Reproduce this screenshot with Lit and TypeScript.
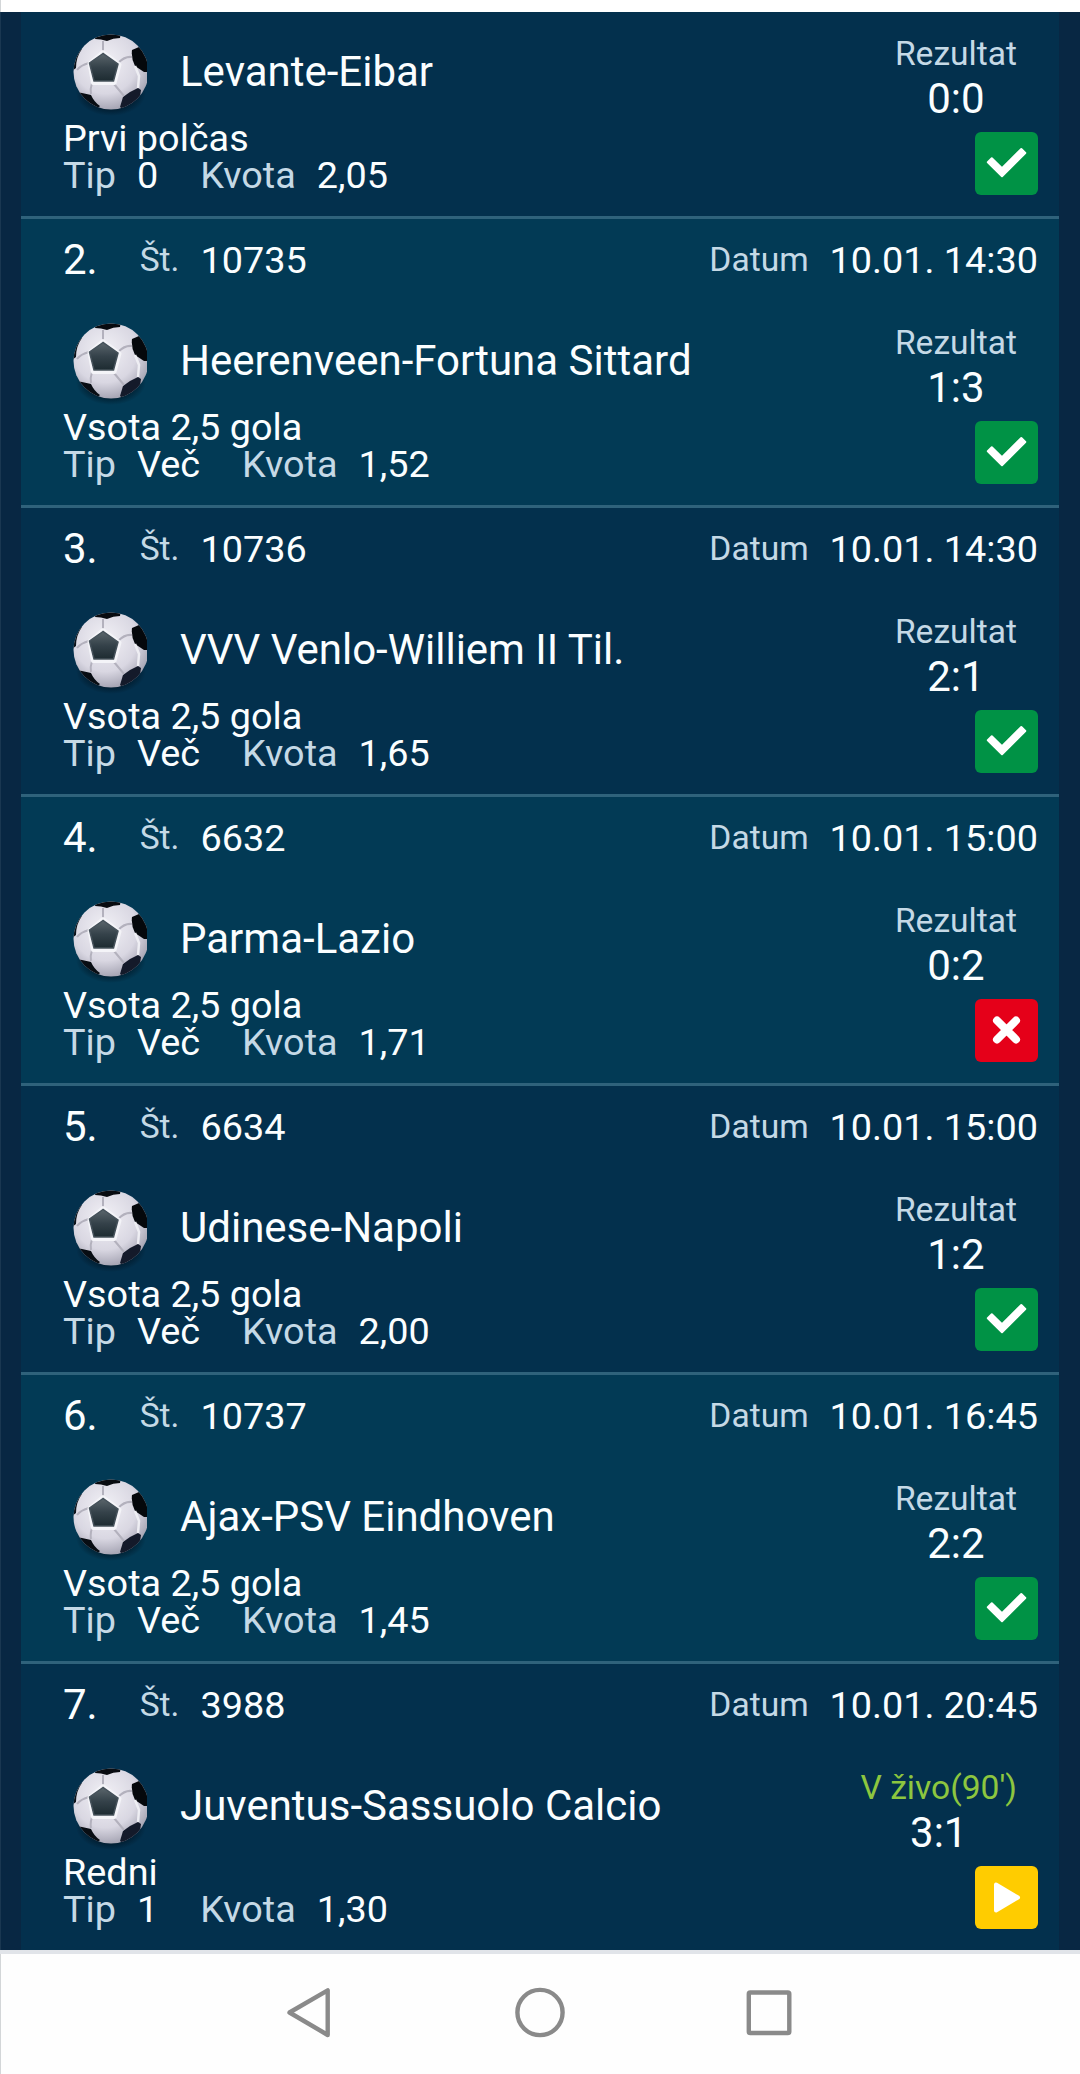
import { LitElement, html, css, svg } from "lit";
import { customElement, property } from "lit/decorators.js";

type Status = "won" | "lost" | "live";

interface Match {
  index: number;
  code?: string;
  date?: string;
  teams: string;
  market: string;
  tip: string;
  odds: string;
  resultLabel: string;
  score: string;
  status: Status;
}

const MATCHES: Match[] = [
  { index: 1, teams: "Levante-Eibar", market: "Prvi polčas", tip: "0", odds: "2,05", resultLabel: "Rezultat", score: "0:0", status: "won" },
  { index: 2, code: "10735", date: "10.01. 14:30", teams: "Heerenveen-Fortuna Sittard", market: "Vsota 2,5 gola", tip: "Več", odds: "1,52", resultLabel: "Rezultat", score: "1:3", status: "won" },
  { index: 3, code: "10736", date: "10.01. 14:30", teams: "VVV Venlo-Williem II Til.", market: "Vsota 2,5 gola", tip: "Več", odds: "1,65", resultLabel: "Rezultat", score: "2:1", status: "won" },
  { index: 4, code: "6632", date: "10.01. 15:00", teams: "Parma-Lazio", market: "Vsota 2,5 gola", tip: "Več", odds: "1,71", resultLabel: "Rezultat", score: "0:2", status: "lost" },
  { index: 5, code: "6634", date: "10.01. 15:00", teams: "Udinese-Napoli", market: "Vsota 2,5 gola", tip: "Več", odds: "2,00", resultLabel: "Rezultat", score: "1:2", status: "won" },
  { index: 6, code: "10737", date: "10.01. 16:45", teams: "Ajax-PSV Eindhoven", market: "Vsota 2,5 gola", tip: "Več", odds: "1,45", resultLabel: "Rezultat", score: "2:2", status: "won" },
  { index: 7, code: "3988", date: "10.01. 20:45", teams: "Juventus-Sassuolo Calcio", market: "Redni", tip: "1", odds: "1,30", resultLabel: "V živo(90')", score: "3:1", status: "live" },
];

@customElement("soccer-ball")
class SoccerBall extends LitElement {
  static styles = css`
    :host { display: block; width: 84px; height: 90px; }
    svg { display: block; }
  `;

  render() {
    return html`<svg width="84" height="90" viewBox="0 0 84 90">
      <defs>
        <radialGradient id="shell" cx="0.42" cy="0.36" r="0.66">
          <stop offset="0" stop-color="#f2f1f6"></stop>
          <stop offset="0.65" stop-color="#d9d7e2"></stop>
          <stop offset="1" stop-color="#a3a2b1"></stop>
        </radialGradient>
        <linearGradient id="patch" x1="0" y1="0" x2="0" y2="1">
          <stop offset="0" stop-color="#5b666c"></stop>
          <stop offset="0.5" stop-color="#35424a"></stop>
          <stop offset="1" stop-color="#1d2b31"></stop>
        </linearGradient>
        <radialGradient id="shade">
          <stop offset="0.6" stop-color="#00101c" stop-opacity="0.75"></stop>
          <stop offset="1" stop-color="#00101c" stop-opacity="0"></stop>
        </radialGradient>
        <clipPath id="edge"><circle cx="48" cy="45" r="37.5"></circle></clipPath>
      </defs>
      <ellipse cx="48" cy="66" rx="35" ry="23" fill="url(#shade)"></ellipse>
      <circle cx="48" cy="45" r="37.5" fill="url(#shell)"></circle>
      <g clip-path="url(#edge)">
        <path d="M32 12 L34 5 H58 L57 11 Q50 11 44 14 Q38 12 32 12Z" fill="#080b10"></path>
        <path d="M69 23 L76 20 L90 30 V45 L81 45 L72 39 Q68 31 69 23Z" fill="#05080c"></path>
        <path d="M9 24 L19 22 Q13 30 13 41 L9 44Z" fill="#0b1219"></path>
        <path d="M13 65 L19 66 L28 68 Q31 75 37 79 L30 86 L12 76Z" fill="#080d13"></path>
        <path d="M57 80 L60 70 L67 65 L75 61 L78 63 L76 76 L62 84Z" fill="#141a2a"></path>
        <path d="M40 27 V14 M55 36 Q62 29 69 30 M51 57 L61 69 M29 56 Q27 62 28 67 M26 36 Q18 38 14 43" fill="none" stroke="#b3b1bd" stroke-width="2"></path>
        <path d="M72 39 L76 49 L75 61" fill="none" stroke="#eeeef3" stroke-width="2.500"></path>
        <path d="M40 25 L26.500 36.500 L30 56 H51.500 L56.500 37.500Z" fill="none" stroke="#f4f4f8" stroke-width="4" stroke-linejoin="round"></path>
        <path d="M40 26.500 L26.500 36 L31 54 H50.500 L55 37Z" fill="url(#patch)" stroke="#45515a" stroke-width="1.500"></path>
      </g>
    </svg>`;
  }
}

@customElement("status-badge")
class StatusBadge extends LitElement {
  @property() status: Status = "won";

  static styles = css`
    :host { display: block; width: 63px; height: 63px; }
    .badge { width: 63px; height: 63px; border-radius: 6px; }
    .won { background: #009245; }
    .lost { background: #e50019; }
    .live { background: #ffcc00; }
    svg { display: block; }
  `;

  glyph() {
    if (this.status === "won") {
      return svg`<path d="M12.800 30.200 L16.800 26.200 L27 36.200 L46.300 17 L50.300 21 L27 44.200Z" fill="#fff" stroke="#fff" stroke-width="2" stroke-linejoin="round"></path>`;
    }
    if (this.status === "lost") {
      return svg`<path d="M22 21.500 L41 40.500 M41 21.500 L22 40.500" stroke="#fff" stroke-width="8" stroke-linecap="round"></path>`;
    }
    return svg`<path d="M21 18.500 V44.500 L43 31.500Z" fill="#fff" stroke="#fff" stroke-width="4" stroke-linejoin="round"></path>`;
  }

  render() {
    return html`<div class="badge ${this.status}">
      <svg width="63" height="63" viewBox="0 0 63 63">${this.glyph()}</svg>
    </div>`;
  }
}

@customElement("match-row")
class MatchRow extends LitElement {
  @property({ attribute: false }) match!: Match;

  static styles = css`
    :host { display: block; color: #fbfeff; white-space: nowrap; }
    .row { box-sizing: border-box; border-bottom: 3px solid #2f627b; background: #03304d; padding: 0 21px 0 42px; }
    .row.even { background: #023a55; }
    .head { height: 82px; box-sizing: border-box; padding: 17px 0; display: flex; align-items: center; line-height: 48px; }
    .num { font-size: 42px; margin-right: 42px; }
    .label { color: #c5d9e6; font-size: 33.600px; margin-right: 21px; }
    .value { font-size: 37.800px; }
    .date { margin-left: auto; display: flex; align-items: center; }
    .body { height: 204px; display: flex; justify-content: space-between; }
    .title { height: 108px; box-sizing: border-box; padding-top: 12px; display: flex; align-items: center; }
    .teams { font-size: 42px; line-height: 48px; margin-left: 33px; }
    .line { font-size: 37.800px; line-height: 37px; display: flex; gap: 21px; }
    .line .muted { color: #c5d9e6; }
    .tip { margin-right: 21px; }
    .side { display: flex; flex-direction: column; align-items: flex-end; padding-top: 22px; }
    .result { margin-right: 21px; text-align: center; margin-bottom: 9px; }
    .rlabel { color: #c5d9e6; font-size: 33.600px; line-height: 40px; }
    .rlabel.live { color: #8dc63f; }
    .score { font-size: 42px; line-height: 49px; }
  `;

  render() {
    const m = this.match;
    return html`<div class="row ${m.index % 2 ? "" : "even"}">
      ${m.code
        ? html`<div class="head">
            <span class="num">${m.index}.</span>
            <span class="label">Št.</span><span class="value">${m.code}</span>
            <div class="date"><span class="label">Datum</span><span class="value">${m.date}</span></div>
          </div>`
        : null}
      <div class="body">
        <div class="info">
          <div class="title"><soccer-ball></soccer-ball><div class="teams">${m.teams}</div></div>
          <div class="line">${m.market}</div>
          <div class="line">
            <span class="muted">Tip</span><span class="tip">${m.tip}</span>
            <span class="muted">Kvota</span><span>${m.odds}</span>
          </div>
        </div>
        <div class="side">
          <div class="result">
            <div class="rlabel ${m.status}">${m.resultLabel}</div>
            <div class="score">${m.score}</div>
          </div>
          <status-badge .status=${m.status}></status-badge>
        </div>
      </div>
    </div>`;
  }
}

@customElement("app-root")
class AppRoot extends LitElement {
  static styles = css`
    :host { display: block; width: 1080px; height: 2074px; overflow: hidden; background: #fff; font-family: Roboto, "Liberation Sans", sans-serif; }
    .page { height: 2074px; display: flex; flex-direction: column; }
    .top { height: 12px; flex: none; background: #fff; border-left: 1px solid #d3d6d8; }
    .list { height: 1938px; flex: none; overflow: hidden; background: #082743; border-left: 1px solid #1a3751; padding: 0 21px 0 20px; box-sizing: border-box; }
    .rule { height: 4px; flex: none; background: #e1e4e9; }
    .nav { flex: 1; background: #fefefe; border-left: 1px solid #d3d6d8; overflow: hidden; }
    .nav svg { display: block; }
  `;

  render() {
    return html`<div class="page">
      <div class="top"></div>
      <div class="list">${MATCHES.map((m) => html`<match-row .match=${m}></match-row>`)}</div>
      <div class="rule"></div>
      <div class="nav">
        <svg width="1079" height="120" viewBox="1 1954 1079 120" fill="none" stroke="#8a8a8a" stroke-width="4.400" stroke-linejoin="round">
          <path d="M327.700 1990.300 V2035 L289.500 2012.500Z"></path>
          <ellipse cx="540" cy="2012.500" rx="22.600" ry="22.600"></ellipse>
          <rect x="748.800" y="1992.500" width="40.500" height="40.500" rx="1.500"></rect>
        </svg>
      </div>
    </div>`;
  }
}
